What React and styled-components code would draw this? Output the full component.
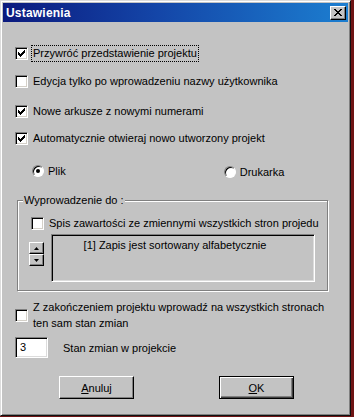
import React from 'react';
import styled, { createGlobalStyle } from 'styled-components';

// --- Global page reset ---
const GlobalStyle = createGlobalStyle`
  html, body {
    margin: 0;
    padding: 0;
    background: #6e1414;
  }
  * {
    box-sizing: border-box;
  }
`;

// --- Window chrome ---
const Window = styled.div`
  width: 351px;
  height: 416px;
  background: #c3c3c3;
  border-top: 1px solid #dcdcdc;
  border-left: 1px solid #dcdcdc;
  border-right: 1px solid #101010;
  border-bottom: 1px solid #101010;
  box-shadow: inset 1px 1px #ffffff, inset -1px -1px #808080;
  padding: 2px;
  display: flex;
  flex-direction: column;
  font-family: "Liberation Sans", Arial, sans-serif;
  font-size: 11px;
  color: #000;
`;

const TitleBar = styled.div`
  height: 19px;
  background: linear-gradient(90deg, #0b1a7e 0%, #1446a8 45%, #1c7ed0 100%);
  display: flex;
  align-items: center;
  justify-content: space-between;
  padding: 0 2px 0 3px;
`;

const Title = styled.span`
  color: #fff;
  font-weight: bold;
  font-size: 12px;
  letter-spacing: 0.2px;
`;

const CloseButton = styled.div`
  width: 16px;
  height: 14px;
  background: #c3c3c3;
  border-top: 1px solid #fff;
  border-left: 1px solid #fff;
  border-right: 1px solid #000;
  border-bottom: 1px solid #000;
  box-shadow: inset -1px -1px #808080;
  display: flex;
  align-items: center;
  justify-content: center;
`;

const Body = styled.div`
  flex: 1;
  display: flex;
  flex-direction: column;
  padding-left: 12px;
`;

// --- Rows ---
const Row = styled.div`
  display: flex;
  align-items: center;
  height: 13px;
  margin-top: ${(p) => p.$top}px;
  margin-left: ${(p) => p.$left || 0}px;
`;

const Box = styled.div`
  width: 13px;
  height: 13px;
  flex: none;
  background: #fff;
  border-top: 1px solid #808080;
  border-left: 1px solid #808080;
  border-right: 1px solid #fff;
  border-bottom: 1px solid #fff;
  box-shadow: inset 1px 1px #000, inset -1px -1px #d4d0c8;
  display: flex;
  align-items: center;
  justify-content: center;
`;

const Label = styled.span`
  margin-left: ${(p) => p.$gap || 4}px;
  white-space: nowrap;
  line-height: 13px;
  padding: 1px 1px;
  outline: ${(p) => (p.$focus ? '1px dotted #000' : 'none')};
  outline-offset: 0;
`;

const Check = () => (
  <svg width="7" height="7" viewBox="0 0 7 7" shapeRendering="crispEdges">
    <path
      d="M0 2h1v3h-1z M1 3h1v3h-1z M2 4h1v3h-1z M3 3h1v3h-1z M4 2h1v3h-1z M5 1h1v3h-1z M6 0h1v3h-1z"
      fill="#000"
    />
  </svg>
);

const CheckBox = ({ checked, label, top, focus, left }) => (
  <Row $top={top} $left={left}>
    <Box>{checked && <Check />}</Box>
    <Label $focus={focus}>{label}</Label>
  </Row>
);

const RadioRow = styled.div`
  display: flex;
  align-items: center;
  margin-top: ${(p) => p.$top}px;
  height: 14px;
`;

const RadioItem = styled.div`
  display: flex;
  align-items: center;
  margin-left: ${(p) => p.$left}px;
  margin-top: ${(p) => p.$dy || 0}px;
`;

const RadioCircle = styled.div`
  width: 12px;
  height: 12px;
  border-radius: 50%;
  background: #fff;
  border-top: 1px solid #808080;
  border-left: 1px solid #808080;
  border-right: 1px solid #fff;
  border-bottom: 1px solid #fff;
  box-shadow: inset 1px 1px #000;
  display: flex;
  align-items: center;
  justify-content: center;

  &::after {
    content: '';
    width: 4px;
    height: 4px;
    border-radius: 50%;
    background: ${(p) => (p.$on ? '#000' : 'transparent')};
  }
`;

// --- Group box ---
const Group = styled.div`
  position: relative;
  margin-top: ${(p) => p.$top}px;
  margin-left: 2px;
  width: 311px;
  height: 91px;
  border: 1px solid #808080;
  box-shadow: inset 1px 1px #fff, 1px 1px #fff;
  display: flex;
  flex-direction: column;
  padding-left: 13px;
`;

const GroupLabel = styled.span`
  position: absolute;
  top: -7px;
  left: 5px;
  background: #c3c3c3;
  padding: 0 1px;
  line-height: 13px;
`;

const ListArea = styled.div`
  display: flex;
  align-items: flex-start;
  margin-top: 4px;
`;

const Spinner = styled.div`
  display: flex;
  flex-direction: column;
  margin-top: 8px;
  margin-left: -2px;
`;

const SpinButton = styled.div`
  width: 15px;
  height: 12px;
  background: #c3c3c3;
  border-top: 1px solid #fff;
  border-left: 1px solid #fff;
  border-right: 1px solid #000;
  border-bottom: 1px solid #000;
  box-shadow: inset -1px -1px #808080;
  display: flex;
  align-items: center;
  justify-content: center;
`;

const ListBox = styled.div`
  width: 264px;
  height: 48px;
  margin-left: 7px;
  background: #c3c3c3;
  border-top: 1px solid #808080;
  border-left: 1px solid #808080;
  border-right: 1px solid #fff;
  border-bottom: 1px solid #fff;
  box-shadow: inset 1px 1px #000, inset -1px -1px #dcdcdc;
  text-align: center;
  padding-top: 4px;
  padding-right: 16px;
`;

// --- Bottom part ---
const MultiRow = styled.div`
  display: flex;
  align-items: center;
  margin-top: ${(p) => p.$top}px;
`;

const MultiLabel = styled.div`
  margin-left: 5px;
  line-height: 16px;
`;

const EditRow = styled.div`
  display: flex;
  align-items: center;
  margin-top: ${(p) => p.$top}px;
`;

const Edit = styled.div`
  width: 33px;
  height: 21px;
  background: #fff;
  border-top: 1px solid #808080;
  border-left: 1px solid #808080;
  border-right: 1px solid #fff;
  border-bottom: 1px solid #fff;
  box-shadow: inset 1px 1px #000, inset -1px -1px #dcdcdc;
  padding: 3px 0 0 4px;
`;

const EditLabel = styled.span`
  margin-left: 15px;
`;

const ButtonRow = styled.div`
  display: flex;
  margin-top: ${(p) => p.$top}px;
  margin-left: 44px;
  gap: 85px;
`;

const Button = styled.div`
  width: 75px;
  height: 23px;
  background: #c3c3c3;
  border-top: 1px solid ${(p) => (p.$default ? '#000' : '#fff')};
  border-left: 1px solid ${(p) => (p.$default ? '#000' : '#fff')};
  border-right: 1px solid #000;
  border-bottom: 1px solid #000;
  box-shadow: ${(p) =>
    p.$default
      ? 'inset 1px 1px #fff, inset -1px -1px #404040, inset -2px -2px #808080'
      : 'inset -1px -1px #808080'};
  display: flex;
  align-items: center;
  justify-content: center;

  u {
    text-decoration: underline;
  }
`;

const App = () => {
  return (
    <>
      <GlobalStyle />
      <Window>
        <TitleBar>
          <Title>Ustawienia</Title>
          <CloseButton>
            <svg width="8" height="7" viewBox="0 0 8 7" shapeRendering="crispEdges">
              <path
                d="M0 0h2v1h-2z M6 0h2v1h-2z M1 1h2v1h-2z M5 1h2v1h-2z M2 2h4v1h-4z M3 3h2v1h-2z M2 4h4v1h-4z M1 5h2v1h-2z M5 5h2v1h-2z M0 6h2v1h-2z M6 6h2v1h-2z"
                fill="#000"
              />
            </svg>
          </CloseButton>
        </TitleBar>
        <Body>
          <CheckBox top={25} checked focus label="Przywróć przedstawienie projektu" />
          <CheckBox top={15} label="Edycja tylko po wprowadzeniu nazwy użytkownika" />
          <CheckBox top={17} checked label="Nowe arkusze z nowymi numerami" />
          <CheckBox top={14} checked label="Automatycznie otwieraj nowo utworzony projekt" />

          <RadioRow $top={19}>
            <RadioItem $left={17}>
              <RadioCircle $on />
              <Label $gap={3}>Plik</Label>
            </RadioItem>
            <RadioItem $left={157} $dy={2}>
              <RadioCircle />
              <Label $gap={3}>Drukarka</Label>
            </RadioItem>
          </RadioRow>

          <Group $top={22}>
            <GroupLabel>Wyprowadzenie do :</GroupLabel>
            <CheckBox top={16} label="Spis zawartości ze zmiennymi wszystkich stron projedu" />
            <ListArea>
              <Spinner>
                <SpinButton>
                  <svg width="5" height="3" viewBox="0 0 5 3">
                    <path d="M2.5 0L5 3H0z" fill="#000" />
                  </svg>
                </SpinButton>
                <SpinButton>
                  <svg width="5" height="3" viewBox="0 0 5 3">
                    <path d="M0 0h5L2.5 3z" fill="#000" />
                  </svg>
                </SpinButton>
              </Spinner>
              <ListBox>[1] Zapis jest sortowany alfabetycznie</ListBox>
            </ListArea>
          </Group>

          <MultiRow $top={8}>
            <Box />
            <MultiLabel>
              Z zakończeniem projektu wprowadź na wszystkich stronach
              <br />
              ten sam stan zmian
            </MultiLabel>
          </MultiRow>

          <EditRow $top={6}>
            <Edit>3</Edit>
            <EditLabel>Stan zmian w projekcie</EditLabel>
          </EditRow>

          <ButtonRow $top={18}>
            <Button>
              <span><u>A</u>nuluj</span>
            </Button>
            <Button $default>
              <span><u>O</u>K</span>
            </Button>
          </ButtonRow>
        </Body>
      </Window>
    </>
  );
};

export default App;
